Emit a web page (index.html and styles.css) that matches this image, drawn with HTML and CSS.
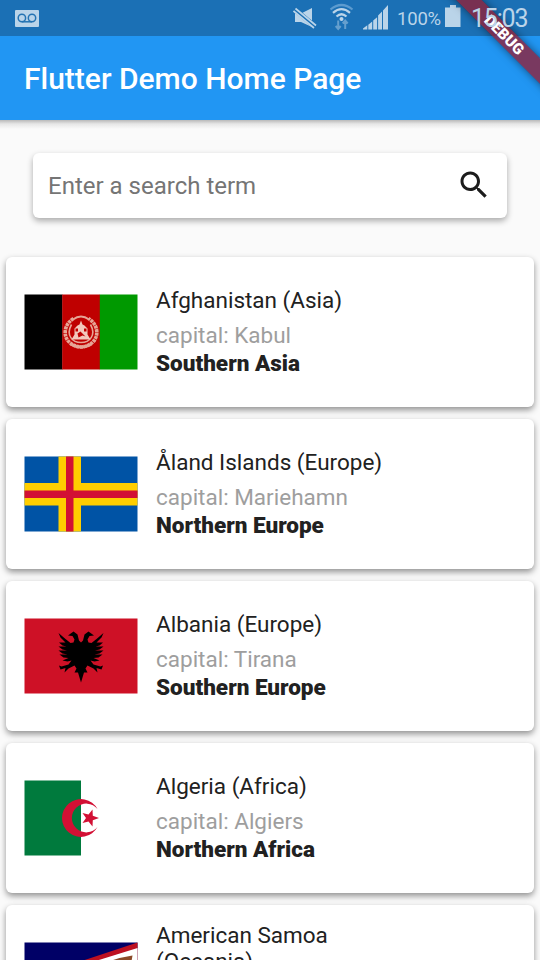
FILE: index.html
```html
<!DOCTYPE html>
<html lang="en">
<head>
<meta charset="utf-8">
<title>Flutter Demo</title>
<link rel="stylesheet" href="styles.css">
</head>
<body>
<div class="screen">
  <header class="top">
    <div class="status">
      <svg class="voicemail" viewBox="0 0 24 17" width="24" height="17">
        <rect width="24" height="17" rx="1" fill="#bad4e9"/>
        <g fill="none" stroke="#2473b3" stroke-width="1.500"><circle cx="6.900" cy="8" r="3.700"/><circle cx="17" cy="8" r="3.700"/><path d="M6.900 11.800H17"/></g>
      </svg>
      <svg class="signals" viewBox="0 0 100 36" width="100" height="36">
        <path d="M2 13.500h6L19 8v19L8 22H2z" fill="#bad4e9"/>
        <path d="M.5 8.500 22 26.500" stroke="#1b70b5" stroke-width="5"/>
        <path d="M.5 11 21 28M2.500 8.500 23 25.500" stroke="#bad4e9" stroke-width="1.700"/>
        <g fill="none" stroke-width="2.200">
          <path d="M37.500 9.500Q48.500.5 59.500 9.500" stroke="#5c9bcf"/>
          <path d="M40 12.800Q48.500 5.500 57 12.800M43.500 16.500Q48.500 12 53.500 16.500" stroke="#bad4e9"/>
        </g>
        <circle cx="48.500" cy="19" r="2" fill="#bad4e9"/>
        <path d="M45.200 20.500v8m-2.500-2.500 2.500 3 2.500-3M52.200 29v-8m-2.500 2.500 2.500-3 2.500 3" fill="none" stroke="#659fce" stroke-width="2"/>
        <path d="M70 29.500v-1l4.300-3.300v4.300zM75.300 24.800l3.900-3.300v8h-3.900zM80.200 20.500l3.900-3.300v12.300h-3.900zM85.100 15.500l3.900-4v18h-3.900zM90 10.500 95 5v24.500h-5z" fill="#bad4e9"/>
      </svg>
      <span class="percent">100%</span>
      <svg class="battery" viewBox="0 0 16 23" width="16" height="23"><path d="M5 0h6v2.500h4.500V22H0V2.500h5z" fill="#bad4e9"/></svg>
      <span class="clock">15:03</span>
    </div>
    <h1 class="title">Flutter Demo Home Page</h1>
    <div class="banner">DEBUG</div>
  </header>
  <main>
    <div class="search">
      <span>Enter a search term</span>
      <svg viewBox="0 0 24 24" width="36" height="36"><path fill="#1c1c1c" d="M15.500 14h-.79l-.28-.27C15.410 12.590 16 11.110 16 9.500 16 5.910 13.090 3 9.500 3S3 5.910 3 9.500 5.910 16 9.500 16c1.610 0 3.090-.59 4.230-1.570l.27.28v.79l5 4.990L20.490 19l-4.990-5zm-6 0C7.010 14 5 11.990 5 9.500S7.010 5 9.500 5 14 7.010 14 9.500 11.990 14 9.500 14z"/></svg>
    </div>
    <ul class="list">
      <li class="card">
        <svg class="flag" viewBox="-.5 -.5 114 76">
          <path fill="#000" d="M0 0h38v75H0z"/><path fill="#bf0000" d="M37.700 0H75.500v75H37.700z"/><path fill="#090" d="M75.300 0H113v75H75.300z"/>
          <g fill="none" stroke="#e6a596">
            <path d="M49 24C36 32 38 51 56.500 52.500C75 51 77 32 64 24" stroke-width="3.600" stroke-dasharray="3 .6"/>
            <path d="M47 30C41 41 48 48 56.500 48S72 41 66 30" stroke-width="1.600"/>
            <path d="M48.500 25Q56.500 19 64.500 25" stroke-width="2"/>
            <path d="M46 49.500q10.500 6 21 0" stroke-width="3"/>
          </g>
          <path fill="#f2c8bc" d="M50 34l3-3 2-1 1.500-4 1.500 4 2 1 3 3v6l3 5H47l3-5z"/>
          <path fill="#bf0000" d="M51 34h2.500v3H51zM59.500 34H62v3h-2.500zM53 39l3-2 5 5-3-1-4 2z"/>
        </svg>
        <div class="info"><p class="name">Afghanistan (Asia)</p><p class="capital">capital: Kabul</p><p class="region">Southern Asia</p></div>
      </li>
      <li class="card">
        <svg class="flag" viewBox="-.5 -.5 114 76">
          <path fill="#0053a5" d="M0 0h113v75H0z"/><path fill="#ffce00" d="M34 0h22.500v75H34zM0 26.500h113v22.500H0z"/><path fill="#d21034" d="M41.500 0H49v75h-7.500zM0 34h113v7.500H0z"/>
        </svg>
        <div class="info"><p class="name">Åland Islands (Europe)</p><p class="capital">capital: Mariehamn</p><p class="region">Northern Europe</p></div>
      </li>
      <li class="card">
        <svg class="flag" viewBox="-.5 -.5 114 76">
          <path fill="#ce1126" d="M0 0h113v75H0z"/>
          <path d="M56.500 24 54.500 22 53 16 49 13 43.500 17 48 17.500 50 21 49 24 46 24.500 41 20.500 34 14.500 36 19 41 24H34.500L38 27 42 28H34L38 31 42.500 32H34L38 35 43 36H35L39 39 44 39.500 38 42 43 43 47 42 44 46 37 48 34.500 47 36 51 41 49.500 40 54 44 50 50 47 52 50 50 54 53.500 54 56.500 64 59.500 54 63 54 61 50 63 47 69 50 73 54 72 49.500 77 51 78.500 47 76 48 69 46 66 42 70 43 75 42 69 39.500 74 39 78 36H70L75 35 79 32H70.500L75 31 79 28H71L75 27 78.500 24H72L77 19 79 14.500 72 20.500 67 24.500 64 24 63 21 65 17.500 69.500 17 64 13 60 16 58.500 22z"/>
        </svg>
        <div class="info"><p class="name">Albania (Europe)</p><p class="capital">capital: Tirana</p><p class="region">Southern Europe</p></div>
      </li>
      <li class="card">
        <svg class="flag" viewBox="-.5 -.5 114 76">
          <path fill="#fff" d="M0 0h113v75H0z"/><path fill="#007a3d" d="M0 0h56.500v75H0z"/>
          <path fill="#d21034" d="M73 28.500A18.900 18.900 0 1 0 73 46.500A14.400 14.400 0 1 1 73 28.500z"/>
          <path fill="#d21034" d="M74.500 37.500 68.300 39.700 68 46 64 41 58 42.500 61.500 37.500 58 32.500 64 34 68 29 68.300 35.300z"/>
        </svg>
        <div class="info"><p class="name">Algeria (Africa)</p><p class="capital">capital: Algiers</p><p class="region">Northern Africa</p></div>
      </li>
      <li class="card">
        <svg class="flag" viewBox="-.5 -.5 114 76">
          <path fill="#006" d="M0 0h113v75H0z"/><path fill="#bd1021" d="M113 0v75L0 37.500z"/><path fill="#fff" d="M113 5.500v64L10 37.500z"/>
          <path fill="#8b4a28" d="M108 13 95 15.500 84 19 70 30 90 34 106 24z"/>
        </svg>
        <div class="info"><p class="name">American Samoa<br>(Oceania)</p></div>
      </li>
    </ul>
  </main>
</div>
</body>
</html>
```

FILE: styles.css
```css
* { box-sizing: border-box; margin: 0; padding: 0; }
body { font-family: Roboto, "Liberation Sans", sans-serif; background: #fafafa; }
.screen { width: 540px; height: 960px; overflow: hidden; background: #fafafa; }
.top {
  position: relative;
  height: 120px;
  overflow: hidden;
  background: #2196f3;
}
.status {
  height: 36px;
  display: flex;
  align-items: center;
  background: #1b70b5;
  color: #bad4e9;
}
.voicemail { margin-left: 15px; }
.signals { margin-left: 254px; flex: none; }
.percent { margin-left: 4px; width: 44px; font-size: 18.500px; line-height: 36px; padding-top: 2px; letter-spacing: -.2px; }
.battery { margin: -4px 0 0 4px; flex: none; }
.clock {
  position: relative;
  z-index: 1;
  margin-left: 10px;
  font-size: 25px;
  line-height: 36px;
  letter-spacing: -1.200px;
  padding-top: 1px;
}
.title {
  height: 84px;
  padding-left: 24px;
  line-height: 85px;
  font-size: 30px;
  font-weight: 500;
  color: #fff;
}
.banner {
  position: absolute;
  left: 404px;
  top: 26px;
  width: 200px;
  height: 18px;
  transform: rotate(45deg);
  background: rgba(150, 28, 50, .76);
  box-shadow: 0 0 9px rgba(0, 0, 0, .5);
  color: #fff;
  text-align: center;
  font-size: 15.300px;
  line-height: 18px;
  font-weight: 900;
}
main {
  padding: 33px 6px 0;
  background: linear-gradient(rgba(0, 0, 0, .26), rgba(0, 0, 0, .08) 4px, transparent 9px);
}
.search {
  display: flex;
  align-items: center;
  justify-content: space-between;
  height: 65px;
  margin: 0 27px 39px;
  padding: 0 15px;
  border-radius: 6px;
  background: #fff;
  color: #757575;
  font-size: 24px;
  box-shadow: 0 3px 6px rgba(0, 0, 0, .32);
}
.search svg { margin-top: -2px; }
.list { list-style: none; display: flex; flex-direction: column; gap: 12px; }
.card {
  display: flex;
  align-items: center;
  height: 150px;
  padding-left: 18px;
  border-radius: 6px;
  background: #fff;
  box-shadow: 0 3px 6px rgba(0, 0, 0, .42);
}
.flag { width: 114px; height: 76px; flex: none; }
.info { height: 90px; margin-left: 18px; color: #212121; font-size: 22.500px; }
.name { line-height: 26px; margin-bottom: 8px; }
.card:last-child .info { height: 116px; }
.capital { line-height: 28px; color: #9e9e9e; }
.region { line-height: 28px; font-weight: 900; }
```
